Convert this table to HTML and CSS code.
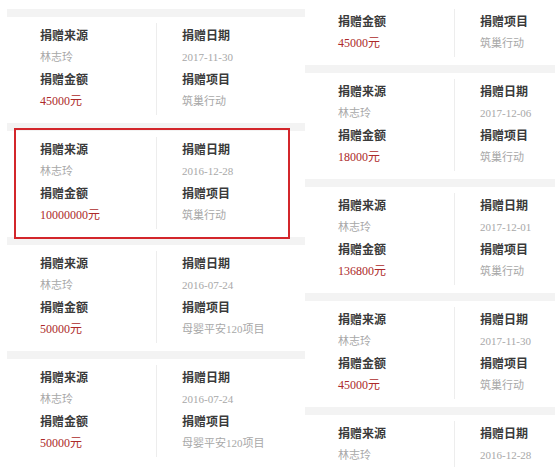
FILE: index.html
```html
<!DOCTYPE html>
<html lang="zh-CN">
<head>
  <meta charset="UTF-8">
  <meta name="viewport" content="width=device-width, initial-scale=1.0">
  <title>捐赠记录</title>
  <link rel="stylesheet" href="styles.css">
</head>
<body>
  <div class="panel panel-left">
    <div class="record">
      <div class="col">
        <div class="label">捐赠来源</div>
        <div class="value">林志玲</div>
        <div class="label">捐赠金额</div>
        <div class="value amount">45000元</div>
      </div>
      <div class="col col-right">
        <div class="label">捐赠日期</div>
        <div class="value">2017-11-30</div>
        <div class="label">捐赠项目</div>
        <div class="value">筑巢行动</div>
      </div>
    </div>

    <div class="record highlight">
      <div class="col">
        <div class="label">捐赠来源</div>
        <div class="value">林志玲</div>
        <div class="label">捐赠金额</div>
        <div class="value amount">10000000元</div>
      </div>
      <div class="col col-right">
        <div class="label">捐赠日期</div>
        <div class="value">2016-12-28</div>
        <div class="label">捐赠项目</div>
        <div class="value">筑巢行动</div>
      </div>
    </div>

    <div class="record">
      <div class="col">
        <div class="label">捐赠来源</div>
        <div class="value">林志玲</div>
        <div class="label">捐赠金额</div>
        <div class="value amount">50000元</div>
      </div>
      <div class="col col-right">
        <div class="label">捐赠日期</div>
        <div class="value">2016-07-24</div>
        <div class="label">捐赠项目</div>
        <div class="value">母婴平安120项目</div>
      </div>
    </div>

    <div class="record">
      <div class="col">
        <div class="label">捐赠来源</div>
        <div class="value">林志玲</div>
        <div class="label">捐赠金额</div>
        <div class="value amount">50000元</div>
      </div>
      <div class="col col-right">
        <div class="label">捐赠日期</div>
        <div class="value">2016-07-24</div>
        <div class="label">捐赠项目</div>
        <div class="value">母婴平安120项目</div>
      </div>
    </div>
  </div>

  <div class="panel panel-right">
    <!-- first record is cut by the screenshot, only its lower half shows -->
    <div class="record record-cut">
      <div class="col">
        <div class="label">捐赠金额</div>
        <div class="value amount">45000元</div>
      </div>
      <div class="col col-right">
        <div class="label">捐赠项目</div>
        <div class="value">筑巢行动</div>
      </div>
    </div>

    <div class="record">
      <div class="col">
        <div class="label">捐赠来源</div>
        <div class="value">林志玲</div>
        <div class="label">捐赠金额</div>
        <div class="value amount">18000元</div>
      </div>
      <div class="col col-right">
        <div class="label">捐赠日期</div>
        <div class="value">2017-12-06</div>
        <div class="label">捐赠项目</div>
        <div class="value">筑巢行动</div>
      </div>
    </div>

    <div class="record">
      <div class="col">
        <div class="label">捐赠来源</div>
        <div class="value">林志玲</div>
        <div class="label">捐赠金额</div>
        <div class="value amount">136800元</div>
      </div>
      <div class="col col-right">
        <div class="label">捐赠日期</div>
        <div class="value">2017-12-01</div>
        <div class="label">捐赠项目</div>
        <div class="value">筑巢行动</div>
      </div>
    </div>

    <div class="record">
      <div class="col">
        <div class="label">捐赠来源</div>
        <div class="value">林志玲</div>
        <div class="label">捐赠金额</div>
        <div class="value amount">45000元</div>
      </div>
      <div class="col col-right">
        <div class="label">捐赠日期</div>
        <div class="value">2017-11-30</div>
        <div class="label">捐赠项目</div>
        <div class="value">筑巢行动</div>
      </div>
    </div>

    <div class="record">
      <div class="col">
        <div class="label">捐赠来源</div>
        <div class="value">林志玲</div>
        <div class="label">捐赠金额</div>
        <div class="value amount">45000元</div>
      </div>
      <div class="col col-right">
        <div class="label">捐赠日期</div>
        <div class="value">2016-12-28</div>
        <div class="label">捐赠项目</div>
        <div class="value">筑巢行动</div>
      </div>
    </div>
  </div>
</body>
</html>
```

FILE: styles.css
```css
html, body {
  height: 100%;
}
body {
  margin: 0;
  background-color: #fff;
  display: flex;
  overflow: hidden;
  font-family: "Noto Sans CJK SC", sans-serif;
}
.panel {
  display: flex;
  flex-direction: column;
}
.panel-left {
  margin-left: 7px;
  width: 298px;
  padding-top: 9px;
}
.panel-right {
  flex: 1;
  overflow: hidden;
}
.record {
  position: relative;
  display: flex;
  flex-shrink: 0;
  border-top: 8px solid #f3f3f3;
  padding: 6px 0 8px 33px;
}
.record-cut {
  border-top: none;
  padding-top: 9px;
}
.col {
  width: 116px;
  padding: 1px 0 3px;
  line-height: 22px;
}
.col-right {
  width: auto;
  flex: 1;
  padding-left: 25px;
  border-left: 1px solid #ededed;
}
.label {
  font-size: 12px;
  font-weight: bold;
  color: #3a3a3a;
}
.value {
  font-family: "Liberation Serif", "Noto Sans CJK SC", serif;
  font-size: 11px;
  color: #a8a8a8;
}
.amount {
  font-size: 12px;
  color: #ad2a2a;
}
.highlight::after {
  content: "";
  position: absolute;
  top: -3px;
  bottom: -2px;
  left: 7px;
  right: 15px;
  border: 2px solid #d3262b;
  z-index: 1;
}
```
